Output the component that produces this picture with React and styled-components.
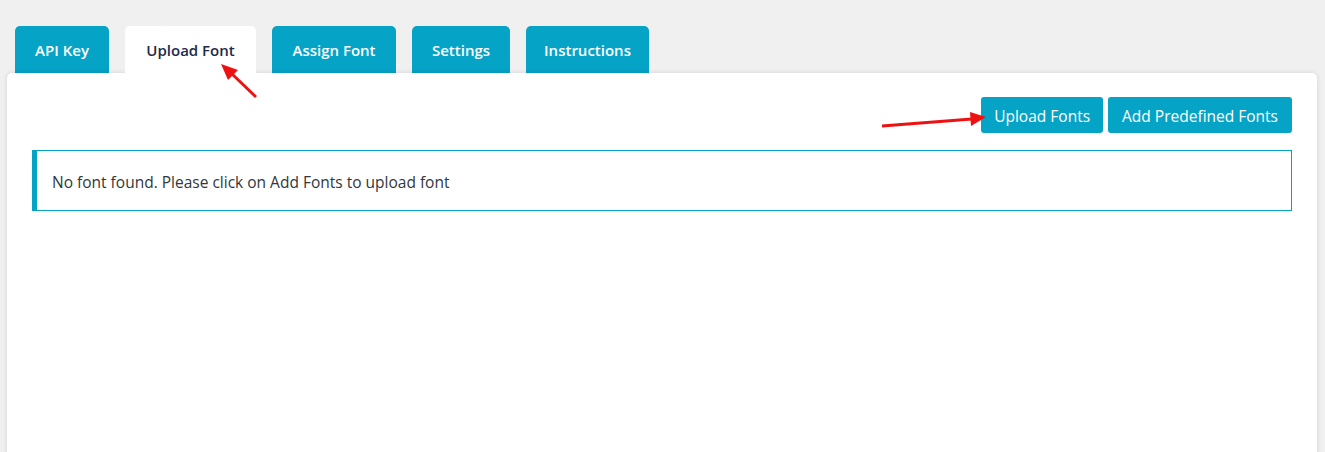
import React from "react";
import styled, { createGlobalStyle } from "styled-components";

const GlobalStyle = createGlobalStyle`
  html, body {
    margin: 0;
    padding: 0;
    background: #f0f0f0;
    font-family: "Open Sans", "Noto Sans", sans-serif;
  }
`;

const Page = styled.div`
  position: relative;
  height: 452px;
  overflow: hidden;
  padding-top: 26px;
  box-sizing: border-box;
`;

const TabBar = styled.div`
  display: flex;
  gap: 16px;
  padding-left: 15px;
  height: 47px;
`;

const Tab = styled.div`
  width: ${(p) => p.w}px;
  height: 47px;
  display: flex;
  align-items: center;
  justify-content: center;
  border-radius: 5px 5px 0 0;
  font-size: 15px;
  font-weight: 600;
  color: ${(p) => (p.active ? "#1d2a4a" : "#ffffff")};
  background: ${(p) => (p.active ? "#ffffff" : "#05a3c6")};
  position: relative;
  z-index: ${(p) => (p.active ? 2 : 0)};
  cursor: pointer;
`;

const Panel = styled.div`
  position: relative;
  z-index: 1;
  margin: 0 8px 0 7px;
  background: #ffffff;
  border-radius: 5px 5px 0 0;
  box-shadow: 0 0 5px rgba(0, 0, 0, 0.12);
  padding: 24px 25px;
  height: 400px;
  box-sizing: border-box;
`;

const Actions = styled.div`
  display: flex;
  justify-content: flex-end;
  gap: 5px;
`;

const Button = styled.button`
  height: 36px;
  padding: 2px ${(p) => p.pad}px 0;
  border: none;
  border-radius: 3px;
  background: #05a3c6;
  color: #ffffff;
  font-family: inherit;
  font-size: 15.5px;
  cursor: pointer;
`;

const Notice = styled.div`
  margin-top: 17px;
  height: 61px;
  box-sizing: border-box;
  border: 1px solid #05a3c6;
  border-left-width: 5px;
  display: flex;
  align-items: center;
  padding: 3px 0 0 15px;
  font-size: 15.5px;
  color: #32373c;
`;

const Annotation = styled.svg`
  position: absolute;
  left: 0;
  top: 0;
  pointer-events: none;
  z-index: 5;
`;

const tabs = [
  { label: "API Key", w: 94 },
  { label: "Upload Font", w: 131, active: true },
  { label: "Assign Font", w: 124 },
  { label: "Settings", w: 98 },
  { label: "Instructions", w: 123 },
];

export default function App() {
  return (
    <>
      <GlobalStyle />
      <Page>
        <TabBar>
          {tabs.map((t) => (
            <Tab key={t.label} w={t.w} active={t.active}>
              {t.label}
            </Tab>
          ))}
        </TabBar>
        <Panel>
          <Actions>
            <Button pad={13}>Upload Fonts</Button>
            <Button pad={14}>Add Predefined Fonts</Button>
          </Actions>
          <Notice>No font found. Please click on Add Fonts to upload font</Notice>
        </Panel>
        <Annotation width="1325" height="452">
          <line x1="256" y1="97" x2="231" y2="73" stroke="#ee1111" strokeWidth="3" />
          <polygon points="221,64 238,70 228,80" fill="#ee1111" />
          <line x1="882" y1="126" x2="972" y2="119" stroke="#ee1111" strokeWidth="3" />
          <polygon points="986,117 970,112 971,126" fill="#ee1111" />
        </Annotation>
      </Page>
    </>
  );
}
